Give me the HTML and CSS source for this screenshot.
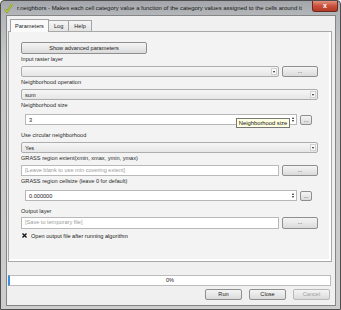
FILE: index.html
```html
<!DOCTYPE html>
<html lang="en">
<head>
    <meta charset="UTF-8">
    <title>r.neighbors</title>
    <link rel="stylesheet" href="styles.css">
</head>
<body>
    <div class="window">
        <div class="titlebar">
            <svg class="app-icon" width="9" height="10" viewBox="0 0 9 10">
                <path d="M1 6 L3 9 L8 1" fill="none" stroke="#7a9a1c" stroke-width="2"/>
                <path d="M1 6 L3 9 L8 1" fill="none" stroke="#d8e04a" stroke-width="0.8"/>
            </svg>
            <span class="title">r.neighbors - Makes each cell category value a function of the category values assigned to the cells around it</span>
            <span class="close-btn">x</span>
        </div>

        <div class="client">
            <div class="tabs">
                <span class="tab active">Parameters</span>
                <span class="tab">Log</span>
                <span class="tab">Help</span>
            </div>

            <div class="panel">
                <div class="btn adv-btn">Show advanced parameters</div>

                <div class="label">Input raster layer</div>
                <div class="row">
                    <div class="combo grow"><span class="combo-text"></span><span class="arrow"></span></div>
                    <div class="btn dots">...</div>
                </div>

                <div class="label">Neighborhood operation</div>
                <div class="row">
                    <div class="combo grow"><span class="combo-text">sum</span><span class="arrow"></span></div>
                </div>

                <div class="label">Neighborhood size</div>
                <div class="row spin-row">
                    <div class="spin"><span class="spin-text">3</span><span class="spin-arrows"><i class="up"></i><i class="down"></i></span></div>
                    <div class="btn dots small">...</div>
                    <div class="tooltip">Neighborhood size</div>
                </div>

                <div class="label gap-lg">Use circular neighborhood</div>
                <div class="row">
                    <div class="combo grow"><span class="combo-text">Yes</span><span class="arrow"></span></div>
                </div>

                <div class="label">GRASS region extent(xmin, xmax, ymin, ymax)</div>
                <div class="row">
                    <div class="edit grow placeholder">[Leave blank to use min covering extent]</div>
                    <div class="btn dots">...</div>
                </div>

                <div class="label">GRASS region cellsize (leave 0 for default)</div>
                <div class="row spin-row">
                    <div class="spin"><span class="spin-text">0.000000</span><span class="spin-arrows"><i class="up"></i><i class="down"></i></span></div>
                    <div class="btn dots small">...</div>
                </div>

                <div class="label gap-lg">Output layer</div>
                <div class="row tall">
                    <div class="edit grow placeholder">[Save to temporary file]</div>
                    <div class="btn dots">...</div>
                </div>

                <div class="check-row">
                    <svg class="check" width="5" height="5" viewBox="0 0 5 5">
                        <path d="M0.5 0.5 L4.5 4.5 M4.5 0.5 L0.5 4.5" stroke="#111" stroke-width="1.3"/>
                    </svg>
                    <span>Open output file after running algorithm</span>
                </div>
            </div>

            <div class="progress">0%</div>

            <div class="actions">
                <div class="btn action">Run</div>
                <div class="btn action">Close</div>
                <div class="btn action disabled">Cancel</div>
            </div>
        </div>
    </div>
</body>
</html>
```

FILE: styles.css
```css
body {
    margin: 0;
    width: 341px;
    height: 310px;
    overflow: hidden;
    background: #ffffff;
    font-family: "Liberation Sans", Arial, sans-serif;
    font-size: 5.6px;
    color: #222;
}

.window {
    width: 341px;
    height: 310px;
    box-sizing: border-box;
    border: 1px solid #4e4e4e;
    border-radius: 4px 4px 0 0;
    background: linear-gradient(#a2a6aa, #b4b7ba 14px, #c6c7c8 60px, #cdcdcd);
    display: flex;
    flex-direction: column;
}

/* title bar */
.titlebar {
    height: 14px;
    display: flex;
    align-items: center;
    padding-left: 3px;
}

.app-icon {
    flex: none;
    margin-right: 4px;
}

.title {
    flex: 1;
    white-space: nowrap;
    overflow: hidden;
    color: #161616;
    font-size: 5.95px;
}

.close-btn {
    align-self: flex-start;
    width: 26px;
    height: 11px;
    margin-right: 2px;
    box-sizing: border-box;
    border: 1px solid #6b2a1f;
    border-top: none;
    border-radius: 0 0 3px 3px;
    background: linear-gradient(#e3907f, #c9503a 50%, #b33a25);
    color: #fff;
    font-weight: bold;
    font-size: 7px;
    line-height: 10px;
    text-align: center;
}

/* client area */
.client {
    flex: 1;
    margin: 0 4px 3px 5px;
    background: #f0f0f0;
    border: 1px solid #858585;
    display: flex;
    flex-direction: column;
}

.tabs {
    display: flex;
    margin: 3px 0 0 3px;
    height: 12px;
    position: relative;
    z-index: 1;
}

.tab {
    box-sizing: border-box;
    height: 11px;
    margin-top: 1px;
    padding: 0 5px;
    line-height: 10px;
    border: 1px solid #a4a4a4;
    border-bottom: none;
    background: linear-gradient(#f6f6f6, #e3e3e3);
    margin-right: -1px;
}

.tab.active {
    height: 13px;
    margin-top: 0;
    padding: 0 4px;
    background: #fafafa;
    line-height: 12px;
}

.panel {
    height: 231px;
    box-sizing: border-box;
    margin: 0 3px 0 1px;
    padding: 10px 13px 0 12px;
    border: 1px solid #a8a8a8;
    background: #f3f3f3;
    box-shadow: inset -2px 0 0 #fff, inset 0 -2px 0 #fff;
}

.btn {
    box-sizing: border-box;
    border: 1px solid #8e8f8f;
    border-radius: 2px;
    background: linear-gradient(#f4f4f4, #e8e8e8 50%, #dadada);
    text-align: center;
    color: #1e1e1e;
}

.adv-btn {
    width: 126px;
    height: 12px;
    line-height: 10px;
}

.label {
    height: 11px;
    line-height: 11px;
    color: #2a2a2a;
}

.gap-lg {
    margin-top: 5px;
}

.row {
    display: flex;
    gap: 3px;
    height: 11px;
    margin-top: 1px;
    position: relative;
}

.row.tall {
    height: 12px;
    margin-top: 0;
}

.grow {
    flex: 1;
}

.combo {
    box-sizing: border-box;
    border: 1px solid #adadad;
    border-radius: 2px;
    background: linear-gradient(#f6f6f6, #e6e6e6);
    display: flex;
    align-items: center;
}

.combo-text {
    flex: 1;
    padding-left: 3px;
}

.arrow {
    width: 6px;
    height: 7px;
    margin-right: 1px;
    box-sizing: border-box;
    border: 1px solid #d0d0d0;
    background: #f8f8f8;
    position: relative;
}

.arrow::after {
    content: "";
    position: absolute;
    left: 1px;
    top: 2px;
    border-left: 1.5px solid transparent;
    border-right: 1.5px solid transparent;
    border-top: 2px solid #222;
}

.dots {
    width: 36px;
    line-height: 8px;
}

.dots.small {
    width: 12px;
    height: 10px;
    margin-top: 1px;
}

.edit {
    box-sizing: border-box;
    border: 1px solid #b9b9b9;
    background: #fff;
    padding-left: 3px;
    line-height: 9px;
}

.placeholder {
    color: #9b9b9b;
}

.spin-row {
    margin-top: 3px;
    padding-left: 4px;
}

.spin {
    width: 272px;
    box-sizing: border-box;
    border: 1px solid #b7b7b7;
    background: #fff;
    display: flex;
    align-items: center;
}

.spin-text {
    flex: 1;
    padding-left: 3px;
}

.spin-arrows {
    display: flex;
    flex-direction: column;
    gap: 1px;
    margin-right: 1px;
    width: 5px;
    align-items: center;
}

.spin-arrows i {
    width: 0;
    height: 0;
    border-left: 1.5px solid transparent;
    border-right: 1.5px solid transparent;
}

.spin-arrows .up {
    border-bottom: 2px solid #222;
}

.spin-arrows .down {
    border-top: 2px solid #222;
}

.tooltip {
    position: absolute;
    left: 215px;
    top: 4px;
    width: 54px;
    height: 10px;
    box-sizing: border-box;
    border: 1px solid #767676;
    background: #ffffe1;
    line-height: 8px;
    font-size: 5.8px;
    text-align: center;
    color: #111;
}

.check-row {
    display: flex;
    align-items: center;
    gap: 4px;
    height: 9px;
    margin-top: 2px;
}

.check {
    margin-left: 1px;
}

.progress {
    margin: 13px 4px 0 1px;
    height: 11px;
    box-sizing: border-box;
    border: 1px solid #bcbcbc;
    border-left: 2px solid #3c8fd8;
    background: #fff;
    text-align: center;
    line-height: 9px;
}

.actions {
    display: flex;
    justify-content: flex-end;
    gap: 7px;
    margin-top: 3px;
    padding-right: 5px;
}

.action {
    width: 37px;
    height: 11px;
    line-height: 9px;
}

.action.disabled {
    color: #a0a0a0;
    border-color: #b8b8b8;
}
```
